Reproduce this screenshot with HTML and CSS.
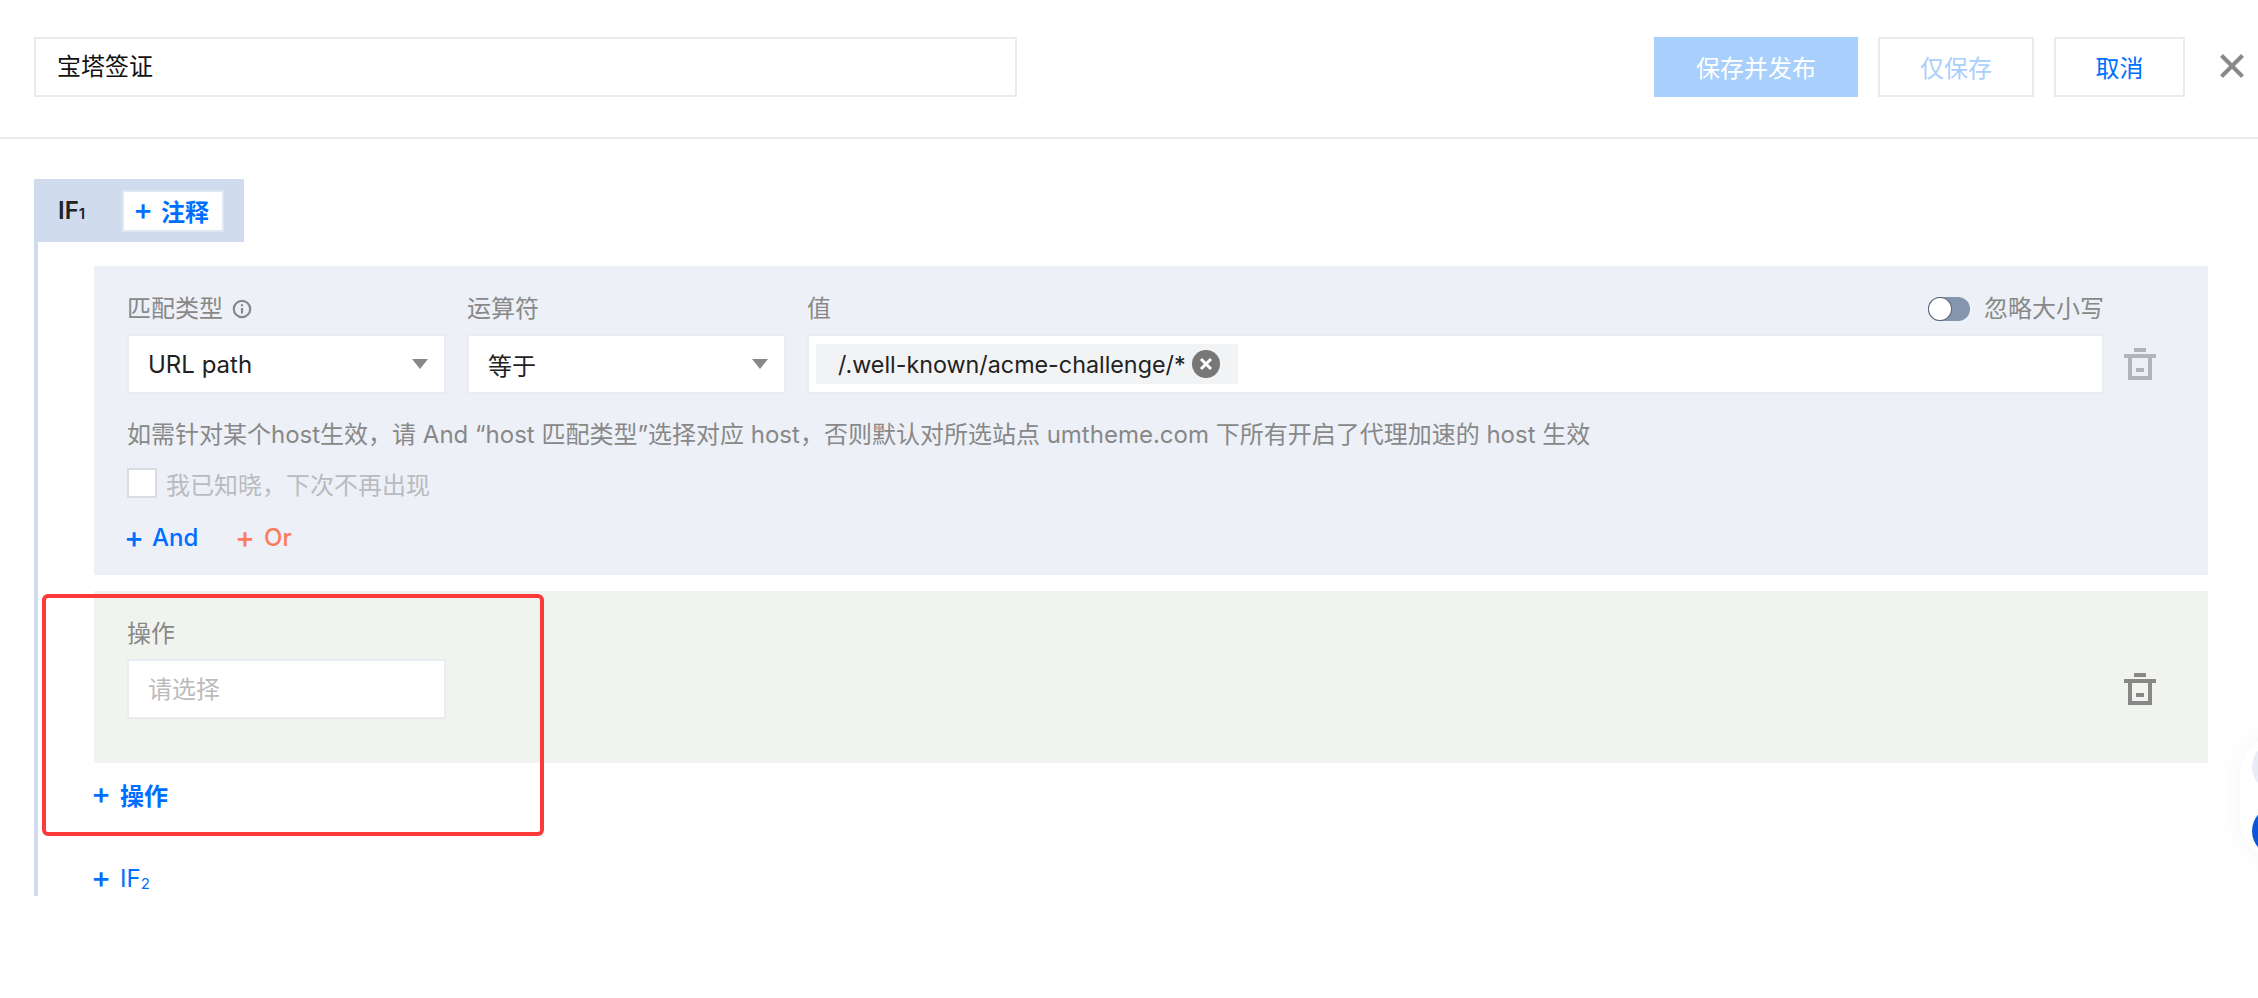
FILE: index.html
```html
<!DOCTYPE html>
<html lang="zh-CN">
<head>
<meta charset="utf-8">
<title>宝塔签证</title>
<link rel="stylesheet" href="styles.css">
</head>
<body>
<header class="topbar">
  <div class="title-input">宝塔签证</div>
  <div class="actions">
    <button class="btn btn-primary">保存并发布</button>
    <button class="btn btn-save">仅保存</button>
    <button class="btn btn-cancel">取消</button>
    <svg class="close" viewBox="0 0 24 24" aria-label="close"><path d="M1.5 1.5 22.5 22.5M22.5 1.5 1.5 22.5"/></svg>
  </div>
</header>

<main class="content">
  <div class="if-head">
    <span class="if-name">IF<small>1</small></span>
    <span class="note-btn"><span class="plus">+</span>注释</span>
  </div>
  <div class="if-body">
    <section class="panel panel-match">
      <div class="match-grid">
        <div class="label">匹配类型
          <svg class="info" viewBox="0 0 20 20"><circle cx="10" cy="10" r="8.2"/><path d="M10 9v5.5M10 5.2v2"/></svg>
        </div>
        <div class="label">运算符</div>
        <div class="label label-split"><span>值</span>
          <span class="case"><span class="toggle"><span class="knob"></span></span>忽略大小写</span>
        </div>
        <div></div>

        <div class="field select"><span>URL path</span><i class="caret"></i></div>
        <div class="field select"><span>等于</span><i class="caret"></i></div>
        <div class="field value">
          <span class="tag">/.well-known/acme-challenge/*
            <svg class="tag-x" viewBox="0 0 28 28"><circle cx="14" cy="14" r="14"/><path d="M9 9l10 10M19 9 9 19"/></svg>
          </span>
        </div>
        <svg class="trash trash-light" viewBox="0 0 32 32"><path d="M10 0h12v4H10zM0 6h32v4H0zM4 10h4v18h16V10h4v22H4zM12 20h8v4h-8z"/></svg>
      </div>
      <p class="hint">如需针对某个host生效，请 And “host 匹配类型”选择对应 host，否则默认对所选站点 umtheme.com 下所有开启了代理加速的 host 生效</p>
      <label class="ack"><span class="checkbox"></span>我已知晓，下次不再出现</label>
      <div class="add-row">
        <span class="link link-and"><span class="plus">+</span>And</span>
        <span class="link link-or"><span class="plus">+</span>Or</span>
      </div>
    </section>

    <section class="panel panel-action">
      <div class="label">操作</div>
      <div class="action-row">
        <div class="field placeholder">请选择</div>
        <svg class="trash" viewBox="0 0 32 32"><path d="M10 0h12v4H10zM0 6h32v4H0zM4 10h4v18h16V10h4v22H4zM12 20h8v4h-8z"/></svg>
      </div>
    </section>

    <div class="link add-action"><span class="plus">+</span>操作</div>
    <div class="link add-if"><span class="plus">+</span>IF<small>2</small></div>
  </div>
</main>

<div class="highlight"></div>
<div class="dock"><span class="dot dot-light"></span><span class="dot dot-blue"></span></div>
</body>
</html>
```
FILE: styles.css
```css
* { box-sizing: border-box; }
html, body { margin: 0; height: 100%; overflow: hidden; background: #fff; }
body {
  position: relative;
  font-family: Inter, "Noto Sans CJK SC", sans-serif;
  font-size: 24px;
  color: #222;
}
.topbar {
  height: 139px;
  border-bottom: 2px solid #e7eaef;
  display: flex;
  align-items: flex-start;
  padding: 37px 14px 0 34px;
}
.title-input {
  width: 983px;
  height: 60px;
  border: 2px solid #e7eaef;
  padding: 0 21px;
  line-height: 56px;
  color: #111;
}
.actions { margin-left: auto; display: flex; align-items: center; }
.btn {
  height: 60px;
  font: inherit;
  background: #fff;
  border: 2px solid #e7eaef;
  padding: 0 0 2px;
  margin-right: 20px;
}
.btn-primary { width: 204px; background: #a9cffd; border-color: #a9cffd; color: #fff; }
.btn-save { width: 156px; color: #a9cffd; }
.btn-cancel { width: 131px; color: #006eff; margin-right: 35px; }
.close { width: 24px; height: 24px; margin-top: -2px; }
.close path { stroke: #888; stroke-width: 4; fill: none; }

.content { padding: 40px 0 0 34px; }
.if-head {
  width: 210px;
  height: 63px;
  background: #d0dced;
  display: flex;
  align-items: center;
  padding-left: 24px;
}
.if-name { width: 64px; color: #222; font-weight: 600; }
small { font-size: 15px; }
.note-btn {
  width: 102px;
  height: 42px;
  background: #fff;
  border: 2px solid #dfe7f2;
  color: #006eff;
  font-weight: 600;
  display: flex;
  align-items: center;
  padding-left: 12px;
}
.plus { font-weight: 500; margin: -3px 8px 0 -3px; font-size: 30px; line-height: 1; }
.if-body {
  width: 2174px;
  height: 654px;
  border-left: 4px solid #d0dced;
  padding: 24px 0 0 56px;
}
.panel { width: 2114px; padding-left: 33px; }
.panel-match { height: 309px; background: #edf0f7; padding-top: 26px; }
.panel-action { height: 172px; margin-top: 16px; background: #f1f4ee; padding-top: 26px; }

.match-grid {
  display: grid;
  grid-template-columns: 340px 340px 1317px 32px;
  grid-template-rows: 34px 60px;
  row-gap: 8px;
  align-items: center;
}
.label { color: #888; line-height: 34px; }
.label-split { display: flex; justify-content: space-between; margin-right: 20px; }
.info { width: 20px; height: 20px; vertical-align: -2px; margin-left: 2px; }
.info circle, .info path { fill: none; stroke: #888; stroke-width: 2.2; }
.case { display: flex; align-items: center; }
.toggle {
  width: 42px;
  height: 24px;
  border-radius: 12px;
  background: #8496ad;
  margin-right: 14px;
  display: flex;
  align-items: center;
}
.knob {
  width: 22px;
  height: 22px;
  margin-left: 1px;
  border-radius: 50%;
  background: #fff;
  box-shadow: 0 0 0 1px #5a6473;
}
.field {
  height: 60px;
  background: #fff;
  border: 2px solid #e9ecf1;
  display: flex;
  align-items: center;
}
.select {
  width: 319px;
  padding: 0 16px 0 19px;
  justify-content: space-between;
  color: #222;
}
.caret {
  width: 0;
  height: 0;
  border-left: 8px solid transparent;
  border-right: 8px solid transparent;
  border-top: 10px solid #888;
}
.value { width: 1297px; padding-left: 7px; }
.tag {
  height: 40px;
  width: 422px;
  background: #f2f3f5;
  display: flex;
  align-items: center;
  justify-content: space-between;
  padding: 1px 18px 0 22px;
  color: #222;
  font-size: 23.3px;
  white-space: nowrap;
}
.tag-x { width: 28px; height: 28px; flex: none; margin-top: -1px; }
.tag-x circle { fill: #777; }
.tag-x path { stroke: #fff; stroke-width: 3; fill: none; }
.trash { width: 32px; height: 32px; display: block; }
.trash path { fill: #888; }
.trash-light path { fill: #b1b4bb; }
.hint { margin: 24px 0 0; line-height: 34px; color: #888; white-space: nowrap; }
.ack { display: flex; align-items: center; margin-top: 16px; height: 30px; color: #b9bbbf; }
.checkbox { width: 30px; height: 30px; background: #fff; border: 2px solid #d9dce1; margin-right: 9px; }
.add-row { display: flex; margin-top: 23px; line-height: 34px; }
.link { color: #006eff; display: flex; align-items: center; height: 34px; font-weight: 600; }
.add-row .link { font-weight: 500; }
.link-and { width: 111px; }
.link-or { color: #fb7b5b; }
.link-or .plus { margin-right: 9px; }
.action-row { display: flex; align-items: center; justify-content: space-between; margin-top: 8px; padding-right: 52px; }
.placeholder { width: 319px; padding: 0 0 3px 19px; color: #bbb; }
.add-action { margin-top: 14px; }
.add-action .plus, .add-if .plus { margin-right: 9px; }
.add-if { margin-top: 50px; font-weight: 400; }
.add-if small { align-self: flex-end; margin-bottom: 2px; }

.highlight {
  position: absolute;
  left: 42px;
  top: 594px;
  width: 502px;
  height: 242px;
  border: 4px solid #fc3a3a;
  border-radius: 6px;
}
.dock {
  position: absolute;
  left: 2240px;
  top: 735px;
  width: 80px;
  height: 125px;
  border-radius: 40px;
  background: #fff;
  box-shadow: 0 0 24px rgba(40, 70, 130, .06);
}
.dot { position: absolute; left: 12px; width: 50px; height: 50px; border-radius: 50%; }
.dot-light { top: 7px; background: #e8ecf6; }
.dot-blue { top: 71px; background: #0a55d9; }
```
